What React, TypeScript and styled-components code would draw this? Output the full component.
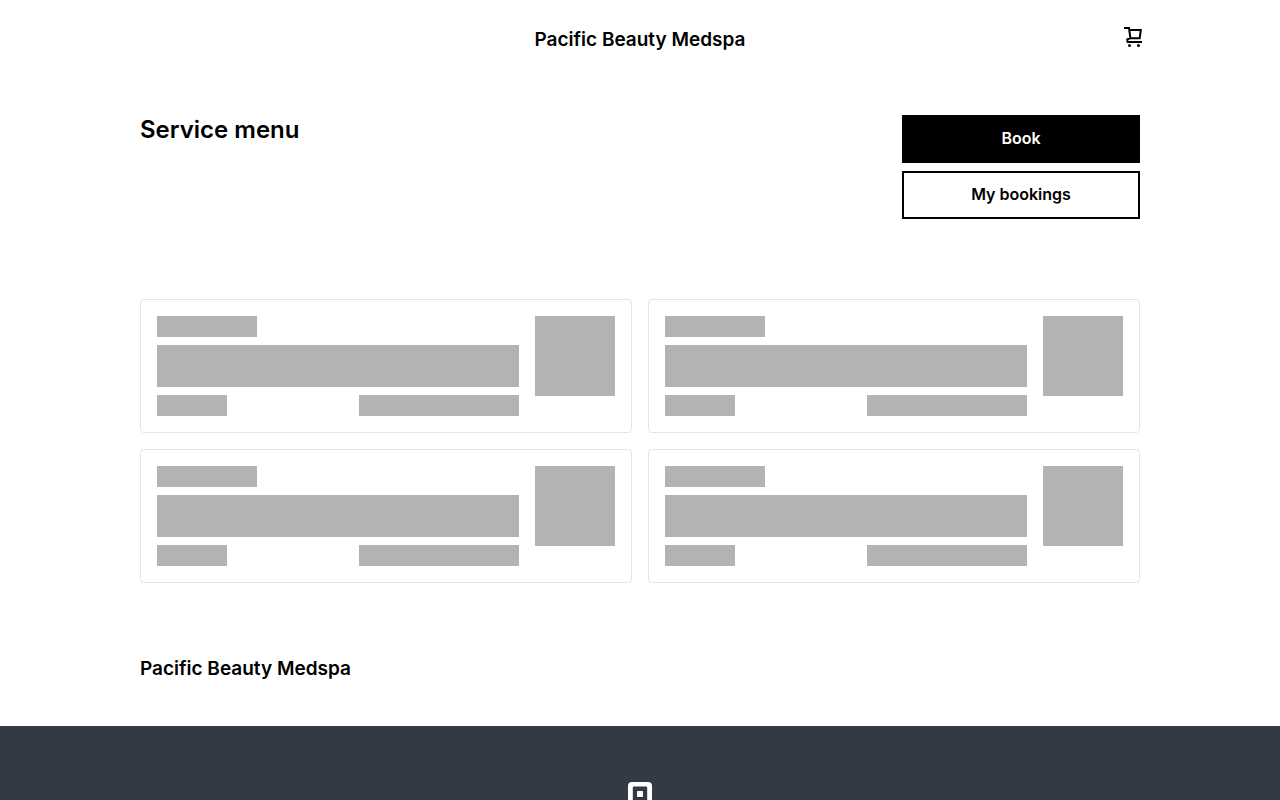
import React from "react";
import styled, { createGlobalStyle } from "styled-components";

const GlobalStyle = createGlobalStyle`
  *, *::before, *::after { box-sizing: border-box; }
  body {
    margin: 0;
    background: #fff;
    color: #000;
    font-family: Inter, "Liberation Sans", sans-serif;
  }
`;

const Container = styled.div`
  width: 100%;
  max-width: 1048px;
  margin: 0 auto;
  padding: 0 24px;
`;

const Header = styled.header`
  display: grid;
  grid-template-columns: 1fr auto 1fr;
  align-items: start;
  padding: 24px 0;
`;

const BusinessName = styled.a`
  grid-column: 2;
  color: #000;
  font-size: 19px;
  font-weight: 600;
  line-height: 32px;
  text-decoration: none;
`;

const CartButton = styled.button`
  justify-self: end;
  display: flex;
  margin-right: -8px;
  padding: 3px 0 0;
  border: 0;
  background: none;
  color: #000;
  cursor: pointer;
`;

const Intro = styled.section`
  display: flex;
  justify-content: space-between;
  align-items: flex-start;
  gap: 24px;
  padding: 35px 0 80px;
`;

const Title = styled.h1`
  margin: 0;
  font-size: 24px;
  font-weight: 600;
  line-height: 30px;
`;

const Actions = styled.div`
  display: flex;
  flex-direction: column;
  gap: 8px;
  width: 238px;
`;

const ActionButton = styled.button<{ $primary?: boolean }>`
  height: 48px;
  padding: 0 16px 2px;
  border: 2px solid #000;
  border-radius: 0;
  background: ${(p) => (p.$primary ? "#000" : "#fff")};
  color: ${(p) => (p.$primary ? "#fff" : "#000")};
  font-family: inherit;
  font-size: 16px;
  font-weight: 600;
  line-height: 24px;
  cursor: pointer;
`;

const Cards = styled.section`
  display: grid;
  grid-template-columns: repeat(2, 1fr);
  gap: 16px;
`;

const Card = styled.div`
  display: flex;
  align-items: flex-start;
  gap: 16px;
  padding: 16px;
  border: 1px solid #e5e5e5;
  border-radius: 4px;
`;

const CardBody = styled.div`
  flex: 1;
  display: flex;
  flex-direction: column;
  gap: 8px;
`;

const CardRow = styled.div`
  display: flex;
  justify-content: space-between;
`;

const Bone = styled.div<{ $w: string; $h: string }>`
  width: ${(p) => p.$w};
  height: ${(p) => p.$h};
  background: #b3b3b3;
`;

const BusinessInfo = styled.section`
  padding: 70px 0 41px;
`;

const BusinessHeading = styled.h2`
  margin: 0;
  font-size: 19px;
  font-weight: 600;
  line-height: 32px;
`;

const Footer = styled.footer`
  display: flex;
  justify-content: center;
  padding: 56px 24px;
  background: #323a44;
`;

const LogoLink = styled.a`
  display: flex;
  color: #fff;
`;

function CartIcon() {
  return (
    <svg width="24" height="24" viewBox="0 0 24 24" fill="none" aria-hidden="true">
      <path
        d="M0 1H5L6.4 11.2H15.7L16.8 3H5.4M6.4 11.2L3.2 12.4L3.6 15H18"
        stroke="currentColor"
        strokeWidth="2"
      />
      <circle cx="5.5" cy="18.5" r="1.5" fill="currentColor" />
      <circle cx="14.5" cy="18.5" r="1.5" fill="currentColor" />
    </svg>
  );
}

function SquareLogo() {
  return (
    <svg width="24" height="24" viewBox="0 0 24 24" fill="currentColor" aria-hidden="true">
      <path
        fillRule="evenodd"
        d="M4 0H20A4 4 0 0 1 24 4V20A4 4 0 0 1 20 24H4A4 4 0 0 1 0 20V4A4 4 0 0 1 4 0ZM6 4.6A1.2 1.2 0 0 0 4.8 5.8V18.2A1.2 1.2 0 0 0 6 19.4H18A1.2 1.2 0 0 0 19.2 18.2V5.8A1.2 1.2 0 0 0 18 4.6ZM9.7 9H14.3A.7 .7 0 0 1 15 9.7V14.3A.7 .7 0 0 1 14.3 15H9.7A.7 .7 0 0 1 9 14.3V9.7A.7 .7 0 0 1 9.7 9Z"
      />
    </svg>
  );
}

function SkeletonCard() {
  return (
    <Card>
      <CardBody>
        <Bone $w="100px" $h="21px" />
        <Bone $w="100%" $h="42px" />
        <CardRow>
          <Bone $w="70px" $h="21px" />
          <Bone $w="160px" $h="21px" />
        </CardRow>
      </CardBody>
      <Bone $w="80px" $h="80px" />
    </Card>
  );
}

export default function App() {
  return (
    <>
      <GlobalStyle />
      <Container>
        <Header>
          <BusinessName href="#">Pacific Beauty Medspa</BusinessName>
          <CartButton type="button" aria-label="Cart">
            <CartIcon />
          </CartButton>
        </Header>
        <main>
          <Intro>
            <Title>Service menu</Title>
            <Actions>
              <ActionButton type="button" $primary>Book</ActionButton>
              <ActionButton type="button">My bookings</ActionButton>
            </Actions>
          </Intro>
          <Cards aria-label="Loading services" aria-busy="true">
            {[0, 1, 2, 3].map((i) => (
              <SkeletonCard key={i} />
            ))}
          </Cards>
          <BusinessInfo>
            <BusinessHeading>Pacific Beauty Medspa</BusinessHeading>
          </BusinessInfo>
        </main>
      </Container>
      <Footer>
        <LogoLink href="#" aria-label="Square">
          <SquareLogo />
        </LogoLink>
      </Footer>
    </>
  );
}
